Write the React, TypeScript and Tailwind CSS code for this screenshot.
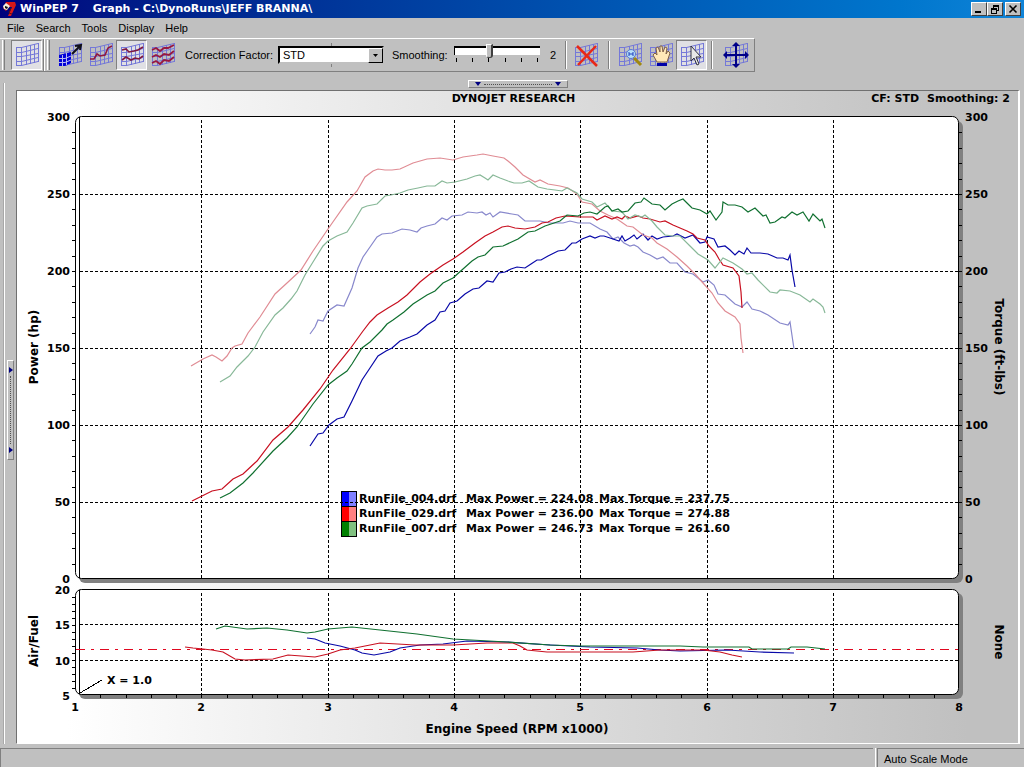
import { useState, ReactNode } from "react";

const runs = [
  {
    name: "RunFile_004.drf", power: "224.08", torque: "237.75", dark: "#0000ff", light: "#8080ff", line: "#0808a8", soft: "#8888cc",
    powerLine: "310,446 318,434 323,433 329,425 337,419 344,417 352,401 362,380 370,368 378,356 386,351 392,348 400,341 410,337 417,334 427,325 435,320 440,312 445,311 450,303 457,301 465,294 473,289 479,288 487,281 493,282 499,273 505,272 511,269 517,267 525,268 531,264 537,260 541,260 548,256 558,251 565,250 572,243 576,243 582,239 590,236 595,238 600,236 604,236 613,239 619,241 622,236 625,241 630,238 634,235 637,239 643,234 648,240 652,236 657,239 663,237 673,236 677,234 685,238 693,235 700,243 705,242 707,237 714,239 718,247 725,246 730,250 735,255 739,251 744,254 747,248 751,253 760,253 768,254 777,258 783,258 788,260 790,255 792,270 795,287",
    torqueLine: "310,334 315,327 318,320 323,321 328,311 337,305 344,306 352,288 358,268 363,257 370,247 377,237 382,234 392,233 402,229 410,230 417,232 421,228 427,226 435,224 442,218 447,220 452,216 462,215 468,212 477,213 482,212 486,215 490,213 493,217 500,212 512,214 518,215 525,221 532,221 540,221 550,223 563,223 570,221 578,223 590,223 600,229 607,232 613,239 618,237 624,243 630,246 634,245 638,247 643,252 650,255 657,259 663,257 670,263 677,263 685,272 693,274 703,282 708,280 714,285 718,294 725,295 735,304 742,307 747,302 752,309 760,311 768,315 780,323 788,325 790,322 794,349",
    fuelLine: "307,638 315,639 325,643 340,646 355,650 362,653 374,655 390,652 400,648 420,645 443,644 467,641 507,642 550,645 590,647 637,648 660,650 680,651 727,650 760,652 794,653",
  },
  {
    name: "RunFile_029.drf", power: "236.00", torque: "274.88", dark: "#ff0000", light: "#ff8080", line: "#c81020", soft: "#e08c94",
    powerLine: "192,501 202,496 212,491 222,489 233,479 243,474 257,461 273,440 288,427 303,410 320,389 333,370 350,349 363,331 370,322 377,315 388,308 398,302 407,295 420,282 430,274 443,265 453,259 463,252 475,243 485,236 493,232 502,227 508,226 515,228 525,229 535,227 542,223 548,222 556,218 565,216 580,217 593,217 597,220 605,216 612,219 617,217 622,219 625,216 630,218 638,216 643,218 650,219 660,222 665,221 673,225 680,228 687,231 693,234 697,238 705,240 709,246 715,252 719,259 723,265 733,268 739,276 741,292 742,308",
    torqueLine: "191,366 203,359 212,355 216,357 222,361 227,356 232,348 235,346 242,344 248,333 260,317 275,294 287,283 301,270 313,251 328,229 347,202 357,191 365,177 373,171 378,169 385,170 392,170 400,169 413,163 427,159 440,158 453,160 463,157 477,155 483,154 493,156 504,158 508,161 515,167 523,175 535,182 540,180 548,184 560,186 568,188 577,194 582,202 592,204 600,211 608,215 617,219 627,226 633,227 643,235 652,238 657,243 667,249 677,257 687,266 695,274 703,283 712,293 718,303 725,311 735,317 740,324 741,338 743,353",
    fuelLine: "185,647 193,648 203,649 212,650 223,652 235,659 245,660 273,659 288,655 315,657 328,654 340,650 355,648 380,643 415,645 453,645 487,643 513,643 520,646 527,650 547,652 633,652 660,650 703,650 720,652 732,655 742,657",
  },
  {
    name: "RunFile_007.drf", power: "246.73", torque: "261.60", dark: "#008000", light: "#80c080", line: "#107030", soft: "#88b898",
    powerLine: "220,498 230,493 243,483 253,473 273,451 287,438 297,427 313,404 328,385 337,378 347,371 352,364 362,348 370,342 382,330 387,324 393,320 404,312 413,304 427,295 435,291 443,283 453,278 463,269 472,261 478,257 485,255 493,247 503,246 518,239 528,232 535,231 545,226 560,221 567,215 578,216 584,213 590,212 597,214 605,207 608,206 612,211 618,209 622,212 628,211 635,203 641,202 644,198 652,204 660,205 665,210 672,204 678,201 683,199 687,203 692,208 700,210 707,214 710,211 716,220 722,212 723,202 728,205 735,205 742,207 748,212 755,208 763,216 766,215 770,223 775,222 782,217 785,218 792,212 797,215 803,212 809,221 813,214 820,221 822,219 825,228",
    torqueLine: "220,382 230,376 237,367 248,356 255,347 263,332 275,315 283,308 291,299 297,291 305,275 313,262 323,246 328,241 337,236 347,232 353,223 362,208 367,206 377,204 385,196 391,195 400,193 408,190 418,188 427,186 435,186 442,181 447,183 455,182 467,179 475,176 480,175 485,178 488,180 493,175 500,178 508,181 514,183 522,183 529,181 538,187 547,189 555,190 562,191 567,188 577,193 582,199 592,202 597,207 605,203 612,211 622,212 628,219 635,215 642,217 645,215 652,221 657,227 665,235 673,236 680,236 690,246 698,254 708,260 715,268 723,258 733,263 742,269 747,274 752,273 758,280 770,292 777,293 780,290 790,291 800,295 810,302 813,299 820,304 823,307 825,313",
    fuelLine: "216,629 225,626 247,629 267,628 287,630 307,633 315,632 328,629 352,627 380,630 417,634 453,639 507,642 550,645 580,646 660,646 680,646 703,647 749,647 752,649 788,649 791,647 807,647 825,649",
  },
];

const xAt = (rpm: number) => 75 + Math.round((rpm - 1) * 126.3);
const yAt = (hp: number) => 579 - Math.round(hp * 1.54);
const range = (from: number, to: number, step: number) =>
  Array.from({ length: Math.floor((to - from) / step + 1.001) }, (_, i) => from + i * step);

const Mesh = () => (
  <path
    d="M2 5.5H7.5L24 1.5M2 10.5H7.5L24 6.5M2 14.5H7.5L24 11.5M2 19.5H7.5L24 15.5M2 23.5H7.5L24 19.5M2.5 5V24M7.5 5V24M12.5 4V23M16.5 3V22M20.5 2V21M24.5 1V20"
    stroke="#7478d8" strokeWidth="1" fill="none"
  />
);

const Tool = ({ label, pressed, children }: { label: string, pressed?: boolean, children?: ReactNode }) => (
  <button
    type="button"
    title={label}
    aria-pressed={pressed}
    className={"flex h-[30px] w-[31px] shrink-0 items-center justify-center border " + (pressed ? "border-t-[#808080] border-l-[#808080] border-r-white border-b-white bg-[#e0e0e4]" : "border-transparent")}
  >
    <svg width="26" height="26" viewBox="0 0 26 26" aria-hidden="true">
      <Mesh />
      {children}
    </svg>
  </button>
);

const Separator = () => <div className="h-[28px] w-[2px] shrink-0 border-l border-[#808080] bg-white" />;

const TitleBar = () => (
  <header className="flex h-[18px] items-center bg-linear-to-r from-[#00007c] to-[#1084d8] pr-[3px] pl-[2px] text-white">
    <svg width="15" height="16" viewBox="0 0 15 16" aria-hidden="true">
      <path d="M4 1H13L14 4L9 15H6L10 6H7L4 10L1 7Z" fill="#d81818" />
      <path d="M1 5L4 2L8 5L5 9L2 8Z" fill="#f0f0e0" />
      <path d="M3 5L6 6L5 8L3 7Z" fill="#101010" />
      <path d="M9 7L7 12L10 13" fill="none" stroke="#601010" />
    </svg>
    <h1 className="ml-[3px] flex gap-[14px] font-['DejaVu_Sans',sans-serif] text-[11px] font-bold whitespace-nowrap">
      <span>WinPEP 7</span>
      <span>Graph - C:\DynoRuns\JEFF BRANNA\</span>
    </h1>
    <div className="ml-auto flex">
      <button type="button" aria-label="Minimize" className="flex h-[14px] w-4 items-center justify-center border border-t-white border-l-white border-r-[#404040] border-b-[#404040] bg-[#c0c0c0]">
        <svg width="10" height="10"><path d="M1 8H7" stroke="#000" strokeWidth="2" /></svg>
      </button>
      <button type="button" aria-label="Restore" className="flex h-[14px] w-4 items-center justify-center border border-t-white border-l-white border-r-[#404040] border-b-[#404040] bg-[#c0c0c0]">
        <svg width="10" height="10" shapeRendering="crispEdges"><path d="M3 1.5H9M3.5 1V4M8.5 1V6M7 6.5H9M1 4.5H7M1 5.5H7M1.5 4V10M6.5 4V10M1 9.5H7M3 2H9" stroke="#000" fill="none" /></svg>
      </button>
      <button type="button" aria-label="Close" className="ml-[2px] flex h-[14px] w-4 items-center justify-center border border-t-white border-l-white border-r-[#404040] border-b-[#404040] bg-[#c0c0c0]">
        <svg width="10" height="10"><path d="M1.500 1.500L8.500 8.500M8.500 1.500L1.500 8.500" stroke="#000" strokeWidth="1.600" /></svg>
      </button>
    </div>
  </header>
);

const ToolBar = () => {
  const [smoothing, setSmoothing] = useState(2);
  const [factor, setFactor] = useState("STD");

  return (
    <div className="flex h-[34px] w-[755px] items-center border-t border-r border-b border-t-white border-r-[#808080] border-b-[#808080]">
      <div className="ml-[2px] h-[30px] w-[3px] border-r border-l border-l-white border-r-[#808080]" />
      <div className="ml-[6px]"><Tool label="Grid" pressed /></div>
      <div className="ml-[1px] h-[32px] w-[2px] border-l border-[#808080] bg-white" />
      <div className="ml-[2px] h-[30px] w-[3px] border-r border-l border-l-white border-r-[#808080]" />
      <div className="ml-[4px] flex">
        <Tool label="Scale">
          <path d="M2 13L14 10V21L8 24H2Z" fill="#0000d8" />
          <path d="M2 16.500H8L14 14M2 20.500H8L14 18M5.500 13V24M9.500 11V23" stroke="#b8b8f0" fill="none" />
          <path d="M15 12L23 4M18 4L24 3L23 8" stroke="#101018" strokeWidth="2" fill="none" />
        </Tool>
        <Tool label="One run">
          <path d="M2 17L6 17L9 12L12 14L17 13L20 6L24 4" stroke="#901840" strokeWidth="1.600" fill="none" />
        </Tool>
        <Tool label="Two runs" pressed>
          <path d="M3 8L7 7L10 10L15 9L19 8L24 5M3 18L7 15L12 18L16 16L20 17L24 14" stroke="#801840" strokeWidth="1.600" fill="none" />
        </Tool>
        <Tool label="All runs">
          <path d="M2 8L6 6L10 9L14 6L18 6L24 3M2 15L6 13L10 15L14 12L19 13L24 9M2 21L6 19L10 22L14 18L19 19L24 15" stroke="#981840" strokeWidth="1.800" fill="none" />
        </Tool>
      </div>
      <label htmlFor="factor" className="ml-[7px] w-[93px] whitespace-nowrap">Correction Factor:</label>
      <div className="relative w-[106px]">
        <span className="absolute -top-[3px] left-[53px] h-[24px] w-px bg-[#808080]" />
        <select
          id="factor"
          value={factor}
          onChange={(e) => setFactor(e.target.value)}
          className="relative block h-[18px] w-full appearance-none border-2 border-[#c0c0c0] border-t-black border-l-black bg-white pl-[3px] text-[11px] leading-[14px] outline-none"
        >
          <option>STD</option>
          <option>SAE</option>
        </select>
        <span className="pointer-events-none absolute top-[2px] right-[1px] flex h-[15px] w-[15px] items-center justify-center border border-t-white border-l-white border-r-black border-b-black bg-[#c0c0c0]">
          <svg width="5" height="3"><path d="M0 0H5L2.500 3Z" /></svg>
        </span>
      </div>
      <label htmlFor="smoothing" className="ml-2 w-[62px] whitespace-nowrap">Smoothing:</label>
      <div className="flex h-[24px] w-[86px] flex-col">
        <input
          id="smoothing"
          type="range"
          min={0}
          max={5}
          value={smoothing}
          onChange={(e) => setSmoothing(Number(e.target.value))}
          className="block h-[15px] w-full appearance-none bg-transparent [&::-webkit-slider-runnable-track]:h-[9px] [&::-webkit-slider-runnable-track]:border-t-2 [&::-webkit-slider-runnable-track]:border-l [&::-webkit-slider-runnable-track]:border-black [&::-webkit-slider-runnable-track]:bg-white [&::-webkit-slider-thumb]:-mt-[4px] [&::-webkit-slider-thumb]:h-[14px] [&::-webkit-slider-thumb]:w-[7px] [&::-webkit-slider-thumb]:appearance-none [&::-webkit-slider-thumb]:rounded-b-[3px] [&::-webkit-slider-thumb]:border [&::-webkit-slider-thumb]:border-white [&::-webkit-slider-thumb]:border-r-2 [&::-webkit-slider-thumb]:border-r-[#404040] [&::-webkit-slider-thumb]:border-b-[#404040] [&::-webkit-slider-thumb]:bg-[#c0c0c0]"
        />
        <div className="flex justify-between px-[2px]">
          {range(0, 5, 1).map((i) => <span key={i} className="h-[4px] w-px bg-black" />)}
        </div>
      </div>
      <output htmlFor="smoothing" className="ml-[10px] w-[15px]">{smoothing}</output>
      <Separator />
      <div className="ml-[3px]">
        <Tool label="Remove runs"><path d="M4 4L24 24M23 4L5 23" stroke="#e82818" strokeWidth="2.500" /></Tool>
      </div>
      <div className="ml-[7px]"><Separator /></div>
      <div className="ml-[4px] flex">
        <Tool label="Zoom">
          <circle cx="14" cy="12" r="4.500" fill="#b8e0f8" stroke="#5878d0" />
          <path d="M12 10V14M12 12H16M16 10V14" stroke="#2040c0" />
          <path d="M17 16L24 23" stroke="#a08810" strokeWidth="3" />
        </Tool>
        <Tool label="Pan">
          <path d="M9 20L5 13L7 11L9 13L8 6L10 5L12 10V4L14 4L15 10L17 5L19 6L18 12L20 9L22 11L19 20Z" fill="#ffe8b8" stroke="#806048" />
          <path d="M9 21H19V24H9Z" fill="#0000a8" />
        </Tool>
        <Tool label="Select" pressed>
          <path d="M12 4V19L15 16L18 23L20 22L17 15H22Z" fill="#e8e8e8" stroke="#303040" />
        </Tool>
      </div>
      <div className="ml-[4px]"><Separator /></div>
      <div className="ml-[7px]">
        <Tool label="Fit">
          <path d="M13 2V24M2 13H24" stroke="#000088" strokeWidth="2" />
          <path d="M13 0L17 4H9ZM13 26L17 22H9ZM0 13L4 9V17ZM26 13L22 9V17Z" fill="#000088" />
        </Tool>
      </div>
    </div>
  );
};

const Chart = () => (
  <svg
    viewBox="17 107 1001 636"
    className="block h-auto w-full font-['DejaVu_Sans',sans-serif] text-[11px] font-bold"
    role="img"
    aria-label="Power, torque and air/fuel against engine speed"
  >
    <rect x="79" y="121" width="884" height="462" rx="6" fill="#808080" />
    <rect x="79" y="593" width="884" height="106" rx="6" fill="#808080" />
    <rect x="75.500" y="116.500" width="883" height="462" rx="6" fill="#fff" stroke="#000" />
    <rect x="75.500" y="589.500" width="883" height="105" rx="6" fill="#fff" stroke="#000" />

    {/* legend */}
    {runs.map((run, i) => (
      <g key={run.name}>
        <rect x="341.500" y={491.5 + i * 15} width="8" height="15" fill={run.dark} />
        <rect x="349.500" y={491.5 + i * 15} width="7" height="15" fill={run.light} />
        <rect x="341.500" y={491.5 + i * 15} width="15" height="15" fill="none" stroke="#000" />
        <text x="359" y={502 + i * 15}>{run.name}</text>
        <text x="466" y={502 + i * 15}>Max Power = {run.power}</text>
        <text x="599" y={502 + i * 15}>Max Torque = {run.torque}</text>
      </g>
    ))}

    {/* grid */}
    <g stroke="#000" shapeRendering="crispEdges" fill="none">
      <path d="M79.500 117V578M79.500 590V694" />
      {range(2, 7, 1).map((x) => (
        <path key={x} strokeDasharray="3 2" d={`M${xAt(x) + 0.5} 120V578M${xAt(x) + 0.5} 593V694`} />
      ))}
      {range(50, 250, 50).map((y) => (
        <path key={y} strokeDasharray="3 2" d={`M80 ${yAt(y) + 0.5}H958`} />
      ))}
      <path strokeDasharray="3 2" d="M80 624.500H958M80 660.500H958" />
      {range(10, 290, 10).map((y) => <path key={y} d={`M72 ${yAt(y) + 0.5}H76M958 ${yAt(y) + 0.5}H962`} />)}
      {range(6, 19, 1).map((y) => <path key={y} d={`M72 ${695.5 - (y - 5) * 7}H76`} />)}
      {range(1.2, 7.8, 0.2).map((x) => <path key={x} d={`M${xAt(x) + 0.5} 694V698`} />)}
      <path d="M80 693L102 680" />
    </g>

    <line x1="76" y1="649.500" x2="958" y2="649.500" stroke="#e00820" strokeDasharray="9 6 3 6" />
    {runs.map((run) => (
      <g key={run.name} fill="none" strokeWidth="1.200">
        <polyline points={run.torqueLine} stroke={run.soft} />
        <polyline points={run.powerLine} stroke={run.line} />
        <polyline points={run.fuelLine} stroke={run.line} />
      </g>
    ))}

    {range(0, 300, 50).map((y) => (
      <g key={y}>
        <text x="70" y={yAt(y) + 4} textAnchor="end">{y}</text>
        <text x="965" y={yAt(y) + 4}>{y}</text>
      </g>
    ))}
    <text x="70" y="594" textAnchor="end">20</text>
    <text x="70" y="629" textAnchor="end">15</text>
    <text x="70" y="665" textAnchor="end">10</text>
    <text x="70" y="700" textAnchor="end">5</text>
    {range(1, 8, 1).map((x) => <text key={x} x={xAt(x)} y="711" textAnchor="middle">{x}</text>)}
    <text x="107" y="684">X = 1.0</text>

    <g className="text-[12px]" textAnchor="middle">
      <text x="517" y="733">Engine Speed (RPM x1000)</text>
      <text transform="translate(38 347) rotate(-90)">Power (hp)</text>
      <text transform="translate(38 641) rotate(-90)">Air/Fuel</text>
      <text transform="translate(995 347) rotate(90)">Torque (ft-lbs)</text>
      <text transform="translate(995 642) rotate(90)">None</text>
    </g>
  </svg>
);

const App = () => {
  return (
    <div className="flex min-h-screen flex-col bg-[#c0c0c0] font-['Liberation_Sans',Arial,sans-serif] text-[11px] leading-[14px] text-black">
      <TitleBar />
      <nav className="flex h-5 items-center gap-[11px] pl-[7px]">
        {["File", "Search", "Tools", "Display", "Help"].map((item) => (
          <button key={item} type="button">{item}</button>
        ))}
      </nav>
      <ToolBar />

      <main className="flex">
        <aside className="flex w-4 items-center justify-end pt-1">
          <div className="mt-[7px] w-[2px] shrink-0 self-stretch border-r border-l border-l-[#a8a8a8] border-r-white" />
          <button type="button" aria-label="Toggle left panel" className="mr-[2px] ml-[2px] flex h-[100px] w-[7px] flex-col items-center justify-between border border-t-white border-l-white border-r-[#808080] border-b-[#808080] py-[6px]">
            <svg width="4" height="6"><path d="M0 0L4 3L0 6Z" fill="#000080" /></svg>
            <span className="h-[68px] border-l border-dotted border-[#505050]" />
            <svg width="4" height="6"><path d="M0 0L4 3L0 6Z" fill="#000080" /></svg>
          </button>
        </aside>
        <div className="mr-1 flex-1">
          <div className="flex h-[18px] items-end justify-center">
            <button type="button" aria-label="Toggle top panel" className="mb-[2px] flex h-[8px] w-[100px] items-center justify-between border border-t-white border-l-white border-r-[#808080] border-b-[#808080] px-[6px]">
              <svg width="6" height="4"><path d="M0 0H6L3 4Z" fill="#000080" /></svg>
              <span className="w-[68px] border-t border-dotted border-[#505050]" />
              <svg width="6" height="4"><path d="M0 0H6L3 4Z" fill="#000080" /></svg>
            </button>
          </div>
          <section className="border-t border-r-2 border-b border-l border-t-[#707070] border-r-white border-b-white border-l-[#707070] bg-linear-to-r from-white from-5% to-[#c0c0c0] to-95%">
            <div className="grid h-4 grid-cols-3 items-center pr-2 font-['DejaVu_Sans',sans-serif] font-bold whitespace-nowrap">
              <h2 className="col-start-2 text-center">DYNOJET RESEARCH</h2>
              <div className="flex justify-end gap-2">
                <span>CF: STD</span>
                <span>Smoothing: 2</span>
              </div>
            </div>
            <Chart />
          </section>
        </div>
      </main>

      <footer className="mt-auto flex h-[20px] border-b border-white">
        <div className="flex-1 border-t border-l border-[#808080]" />
        <div className="ml-[2px] border-l border-white" />
        <div className="ml-[1px] w-[147px] border-t border-l border-[#808080] pt-[3px] pl-[6px]">Auto Scale Mode</div>
      </footer>
    </div>
  );
};
export default App;
